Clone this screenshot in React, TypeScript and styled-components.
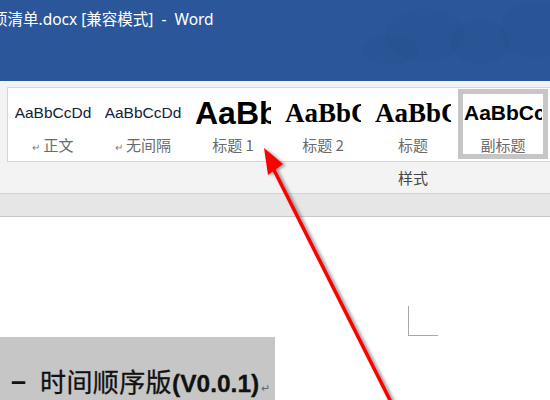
import React from 'react';
import styled, { createGlobalStyle } from 'styled-components';

const GlobalStyle = createGlobalStyle`
  html, body {
    margin: 0;
    padding: 0;
    width: 550px;
    height: 400px;
    overflow: hidden;
    background: #ffffff;
  }
`;

type StyleKind = 'normal' | 'heading1' | 'heading2' | 'title' | 'subtitle';

const styles: { name: string; sample: string; kind: StyleKind; mark?: boolean; selected?: boolean }[] = [
  { name: '正文', sample: 'AaBbCcDd', kind: 'normal', mark: true },
  { name: '无间隔', sample: 'AaBbCcDd', kind: 'normal', mark: true },
  { name: '标题 1', sample: 'AaBbCc', kind: 'heading1' },
  { name: '标题 2', sample: 'AaBbCc', kind: 'heading2' },
  { name: '标题', sample: 'AaBbCc', kind: 'title' },
  { name: '副标题', sample: 'AaBbCcDd', kind: 'subtitle', selected: true },
];

const App = () => {
  return (
    <>
      <GlobalStyle />
      <Window>
        <TitleBar>
          <Clouds viewBox="0 0 220 81" aria-hidden>
            <ellipse cx="95" cy="35" rx="40" ry="26" />
            <ellipse cx="60" cy="50" rx="28" ry="14" />
            <ellipse cx="150" cy="42" rx="30" ry="22" />
            <ellipse cx="205" cy="30" rx="35" ry="28" />
          </Clouds>
          <TitleText>{'项清单.docx [兼容模式]  -  Word'}</TitleText>
        </TitleBar>

        <Ribbon>
          <Gallery>
            {styles.map((s) => (
              <StyleItem key={s.name} $selected={s.selected}>
                <Preview $kind={s.kind}>{s.sample}</Preview>
                <StyleLabel>
                  {s.mark && <Mark>↵</Mark>}
                  {s.name}
                </StyleLabel>
              </StyleItem>
            ))}
          </Gallery>
          <GroupFooter>样式</GroupFooter>
        </Ribbon>

        <Strip />

        <Page>
          <CornerMark />
          <HeadingBlock>
            <Dash>–</Dash>
            <HeadingText>
              时间顺序版<Latin>(V0.0.1)</Latin>
              <ReturnMark>↵</ReturnMark>
            </HeadingText>
          </HeadingBlock>
        </Page>

        <Arrow viewBox="0 0 550 400" aria-hidden>
          <defs>
            <filter id="shade" x="-20%" y="-20%" width="140%" height="140%">
              <feGaussianBlur stdDeviation="1.6" />
            </filter>
          </defs>
          <g filter="url(#shade)" opacity="0.55" transform="translate(2.5 1)">
            <line x1="273" y1="168" x2="400" y2="420" stroke="#555" strokeWidth="4" />
            <polygon points="264,148 283,164 268,175" fill="#555" />
          </g>
          <line x1="273" y1="168" x2="400" y2="420" stroke="#ff0000" strokeWidth="3.5" />
          <polygon points="264,148 283,164 268,175" fill="#ff0000" />
        </Arrow>
      </Window>
    </>
  );
};

export default App;

const Window = styled.div`
  position: relative;
  width: 550px;
  height: 400px;
  display: flex;
  flex-direction: column;
  overflow: hidden;
  font-family: "Noto Sans", "Noto Sans CJK SC", sans-serif;
`;

const TitleBar = styled.div`
  position: relative;
  height: 81px;
  flex-shrink: 0;
  background-color: #2b579a;
  color: #ffffff;
  overflow: hidden;
`;

const Clouds = styled.svg`
  position: absolute;
  right: 0;
  top: 0;
  width: 220px;
  height: 81px;

  ellipse {
    fill: #28528f;
    opacity: 0.5;
  }
`;

const TitleText = styled.div`
  position: relative;
  margin-left: -8px;
  padding-top: 7px;
  font-family: "Noto Sans", "Noto Sans CJK SC", sans-serif;
  font-size: 15.5px;
  line-height: 24px;
  white-space: pre;
`;

const Ribbon = styled.div`
  height: 113px;
  flex-shrink: 0;
  box-sizing: border-box;
  padding: 6px 0 0 7px;
  background-color: #f3f3f3;
  border-bottom: 1px solid #d4d4d4;
`;

const Gallery = styled.div`
  display: flex;
  width: 600px;
  height: 75px;
  box-sizing: border-box;
  background-color: #ffffff;
  border: 1px solid #d6d6d6;
`;

const StyleItem = styled.div<{ $selected?: boolean }>`
  width: 90px;
  flex-shrink: 0;
  box-sizing: border-box;
  display: flex;
  flex-direction: column;
  align-items: center;
  padding-top: ${(p) => (p.$selected ? '2px' : '8px')};
  ${(p) =>
    p.$selected &&
    `
    margin-top: 1px;
    height: 70px;
    border: 5px solid #c6c6c6;
  `}
`;

const previewFonts: Record<StyleKind, string> = {
  normal: `font-family: "Liberation Sans", sans-serif; font-size: 15.5px; color: #14213d;`,
  heading1: `font-family: "Liberation Sans", sans-serif; font-size: 32px; font-weight: bold; color: #000;`,
  heading2: `font-family: "Liberation Serif", serif; font-size: 27px; font-weight: bold; color: #000;`,
  title: `font-family: "Liberation Serif", serif; font-size: 27px; font-weight: bold; color: #000;`,
  subtitle: `font-family: "Liberation Sans", sans-serif; font-size: 21px; font-weight: bold; color: #000;`,
};

const Preview = styled.div<{ $kind: StyleKind }>`
  width: ${(p) => (p.$kind === 'subtitle' ? '78px' : '76px')};
  height: 34px;
  display: flex;
  align-items: center;
  justify-content: ${(p) => (p.$kind === 'normal' ? 'center' : 'flex-start')};
  overflow: hidden;
  white-space: nowrap;
  ${(p) => previewFonts[p.$kind]}
`;

const StyleLabel = styled.div`
  margin-top: 6px;
  font-family: "Noto Sans CJK SC", "Noto Sans", sans-serif;
  font-size: 15px;
  line-height: 18px;
  color: #6a6a6a;
  white-space: nowrap;
`;

const Mark = styled.span`
  font-size: 10px;
  margin-right: 3px;
  color: #7a7a7a;
`;

const GroupFooter = styled.div`
  padding-left: 391px;
  padding-top: 6px;
  font-family: "Noto Sans CJK SC", sans-serif;
  font-size: 15px;
  line-height: 20px;
  color: #444444;
`;

const Strip = styled.div`
  height: 22px;
  flex-shrink: 0;
  background-color: #e6e6e6;
  border-bottom: 1px solid #c8c8c8;
`;

const Page = styled.div`
  flex: 1;
  display: flex;
  flex-direction: column;
  background-color: #ffffff;
`;

const CornerMark = styled.div`
  margin: 89px 0 0 408px;
  width: 30px;
  height: 30px;
  box-sizing: border-box;
  border-left: 1px solid #a8a8a8;
  border-bottom: 1px solid #a8a8a8;
`;

const HeadingBlock = styled.div`
  flex: 1;
  width: 275px;
  margin-top: 1px;
  box-sizing: border-box;
  padding: 29px 0 0 11px;
  display: flex;
  align-items: flex-start;
  background-color: #c6c6c6;
  color: #111111;
`;

const Dash = styled.span`
  width: 29px;
  font-family: "Liberation Sans", sans-serif;
  font-size: 27px;
  font-weight: bold;
  line-height: 30px;
`;

const HeadingText = styled.span`
  font-family: "Noto Sans CJK SC", sans-serif;
  font-size: 26px;
  line-height: 30px;
  white-space: nowrap;
  letter-spacing: 0.4px;
  -webkit-text-stroke: 0.3px #111111;
`;

const Latin = styled.span`
  font-family: "Liberation Sans", sans-serif;
  font-size: 24.5px;
  font-weight: bold;
  letter-spacing: 0;
`;

const ReturnMark = styled.span`
  font-size: 11px;
  color: #666666;
  margin-left: 2px;
  -webkit-text-stroke: 0;
`;

const Arrow = styled.svg`
  position: absolute;
  left: 0;
  top: 0;
  width: 550px;
  height: 400px;
  pointer-events: none;
`;
